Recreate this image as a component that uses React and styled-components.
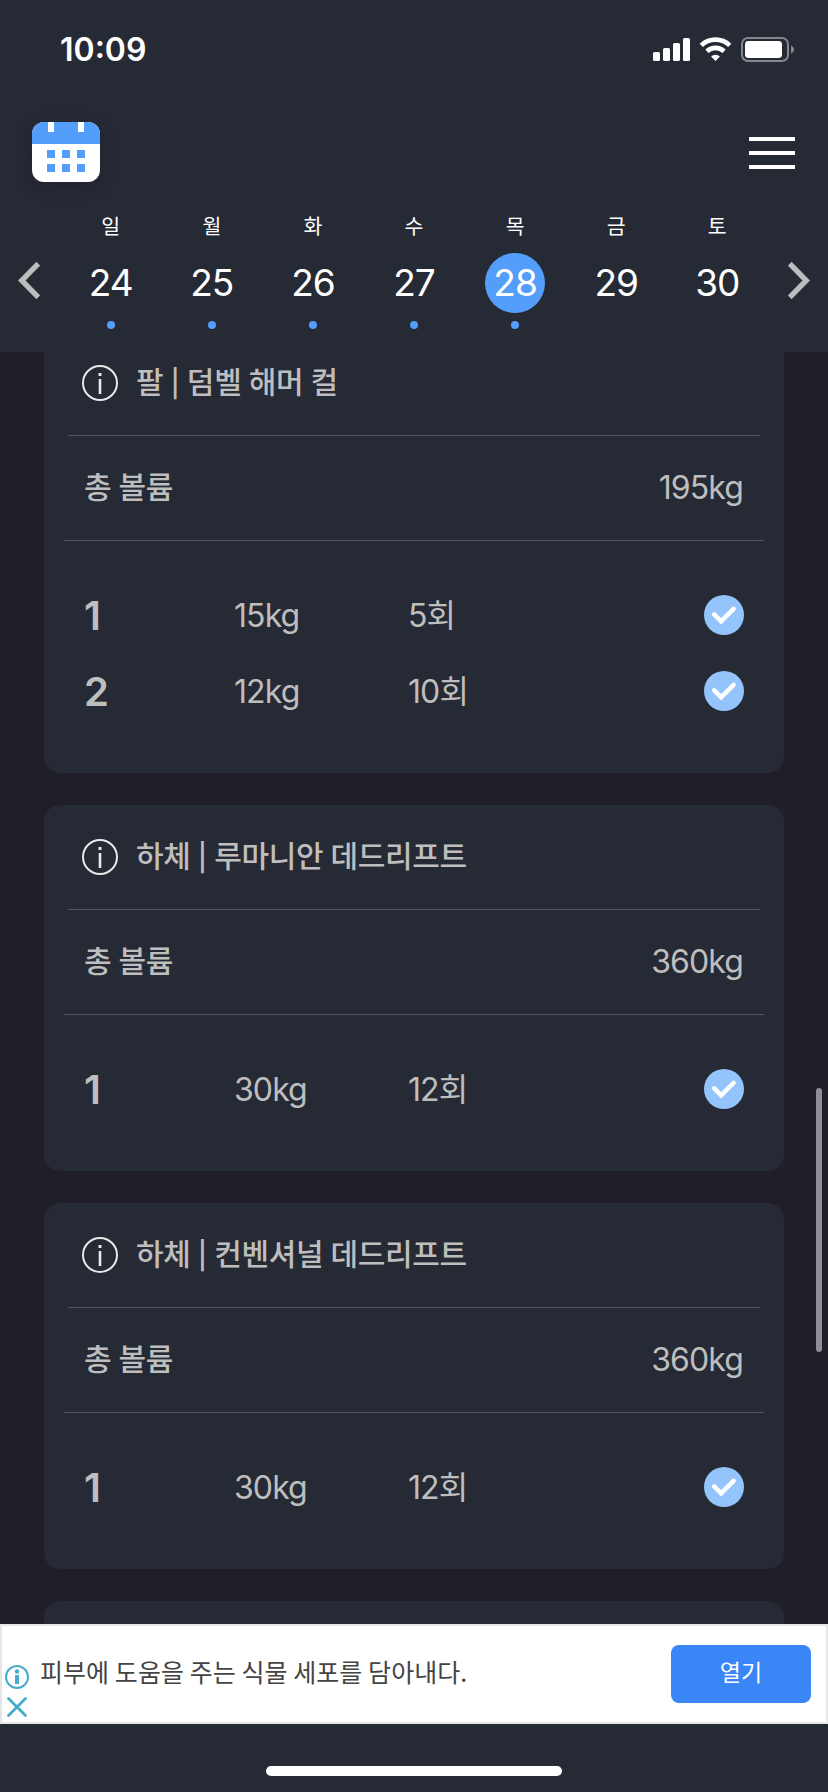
import React from "react";
import styled, { createGlobalStyle } from "styled-components";

const GlobalStyle = createGlobalStyle`
  * { box-sizing: border-box; }
  body { margin: 0; background: #201e29; }
`;

const Screen = styled.div`
  position: relative;
  width: 828px;
  height: 1792px;
  overflow: hidden;
  display: flex;
  flex-direction: column;
  background: #201e29;
  color: #bebebe;
  font-family: Inter, "Noto Sans CJK KR", sans-serif;
`;

const Header = styled.header`
  flex: none;
  height: 352px;
  background: #262a35;
  color: #fff;
`;

const StatusBar = styled.div`
  height: 98px;
  display: flex;
  justify-content: space-between;
  align-items: center;
  padding: 2px 33px 0 60px;
`;

const Time = styled.span`
  font-size: 32px;
  font-weight: 600;
  line-height: 40px;
`;

const TopBar = styled.div`
  height: 106px;
  padding: 24px 33px 0 32px;
  display: flex;
  justify-content: space-between;
`;

const CalendarIcon = styled.svg`
  width: 68px;
  height: 60px;
  border-radius: 12px;
  box-shadow: 0 4px 14px rgba(32, 22, 36, 0.45);
`;

const MenuButton = styled.div`
  width: 46px;
  margin-top: 15px;
  display: flex;
  flex-direction: column;
  gap: 10px;
`;

const MenuLine = styled.span`
  height: 4px;
  background: #fff;
`;

const Week = styled.div`
  display: flex;
  padding: 0 18px;
  justify-content: space-between;
`;

const Arrow = styled.svg`
  width: 22px;
  height: 37px;
  margin-top: 58px;
  fill: none;
  stroke: #bdbdbd;
  stroke-width: 5.4;
`;

const Days = styled.div`
  display: grid;
  grid-template-columns: repeat(7, 101.1px);
`;

const Day = styled.div`
  display: flex;
  flex-direction: column;
  align-items: center;
`;

const DayName = styled.span`
  height: 30px;
  line-height: 30px;
  margin: 8px 0 11px;
  font-size: 20.5px;
`;

const DayNumber = styled.span`
  width: 60px;
  height: 60px;
  padding-bottom: 2px;
  border-radius: 50%;
  display: flex;
  align-items: center;
  justify-content: center;
  background: ${(p) => (p.$selected ? "#539dfb" : "transparent")};
  font-size: 37px;
  letter-spacing: -1px;
`;

const DayDot = styled.span`
  width: 8px;
  height: 8px;
  margin-top: 8px;
  border-radius: 50%;
  background: #539dfb;
`;

const List = styled.main`
  flex: none;
  height: 1272px;
  overflow: hidden;
  padding: 0 44px;
  display: flex;
  flex-direction: column;
  gap: 32px;
`;

const Card = styled.section`
  flex: none;
  margin-top: ${(p) => (p.$scrolled ? "-21px" : "0")};
  min-height: 100px;
  padding: 0 20px 44px;
  border-radius: 16px;
  background: #262a35;
`;

const CardTitle = styled.div`
  height: 105px;
  margin: 0 4px;
  padding: 0 14px 1px;
  border-bottom: 1px solid #55535f;
  display: flex;
  align-items: center;
  gap: 18px;
`;

const InfoIcon = styled.svg`
  width: 36px;
  height: 36px;
  flex: none;
`;

const Label = styled.span`
  padding-bottom: ${(p) => (p.$title ? "0" : "2px")};
  font-size: 30px;
  font-weight: 500;
  line-height: 44px;
  letter-spacing: -0.33px;
  word-spacing: -0.4px;
  white-space: pre;
`;

const Pipe = styled.span`
  font-size: 27px;
`;

const Volume = styled.div`
  height: 105px;
  padding: 0 21px 0 20px;
  border-bottom: 1px solid #55535f;
  display: flex;
  align-items: center;
  justify-content: space-between;
`;

const Amount = styled.span`
  font-size: 32px;
  line-height: 44px;
  letter-spacing: -0.9px;
`;

const Sets = styled.div`
  padding-top: 36px;
`;

const SetRow = styled.div`
  height: 76px;
  padding: 0 20px;
  display: grid;
  grid-template-columns: 150px 174px 1fr 40px;
  align-items: center;
`;

const SetNumber = styled.span`
  padding-top: 2px;
  font-size: 40px;
  font-weight: 600;
  line-height: 48px;
`;

const SetValue = styled.span`
  padding-top: 2px;
  font-size: 32px;
  line-height: 44px;
  letter-spacing: -0.9px;
`;

const Check = styled.svg`
  width: 40px;
  height: 40px;
`;

const Ad = styled.aside`
  flex: none;
  height: 100px;
  border: 2px solid #e6e6e6;
  background: #fff;
  color: #444;
  display: flex;
  align-items: center;
  padding: 0 15px 0 3px;
`;

const AdMarks = styled.svg`
  width: 26px;
  height: 54px;
  margin-top: 36px;
`;

const AdText = styled.span`
  flex: 1;
  margin-left: 9px;
  padding-bottom: 6px;
  font-family: "Noto Sans CJK KR", sans-serif;
  font-size: 25px;
  line-height: 40px;
  letter-spacing: 0.06px;
`;

const AdButton = styled.span`
  width: 140px;
  height: 58px;
  border-radius: 8px;
  background: #3b86f7;
  color: #fff;
  font-family: "Noto Sans CJK KR", sans-serif;
  font-size: 23px;
  line-height: 52px;
  text-align: center;
`;

const Footer = styled.footer`
  flex: 1;
  background: #262a35;
  display: flex;
  justify-content: center;
  padding-top: 42px;
`;

const HomeBar = styled.span`
  width: 296px;
  height: 10px;
  border-radius: 5px;
  background: #fff;
`;

const ScrollThumb = styled.span`
  position: absolute;
  right: 6px;
  top: 1088px;
  width: 6px;
  height: 264px;
  border-radius: 3px;
  background: #8f8e94;
`;

const days = [
  ["일", 24, true],
  ["월", 25, true],
  ["화", 26, true],
  ["수", 27, true],
  ["목", 28, true],
  ["금", 29, false],
  ["토", 30, false],
];

const workouts = [
  { part: "팔", name: "덤벨 해머 컬", volume: "195kg", sets: [["15kg", "5회"], ["12kg", "10회"]] },
  { part: "하체", name: "루마니안 데드리프트", volume: "360kg", sets: [["30kg", "12회"]] },
  { part: "하체", name: "컨벤셔널 데드리프트", volume: "360kg", sets: [["30kg", "12회"]] },
];

function StatusIcons() {
  return (
    <svg width="142" height="26" viewBox="0 0 142 26" fill="#fff">
      <rect x="0" y="15" width="7" height="9" rx="1.6" />
      <rect x="10" y="11" width="7" height="13" rx="1.6" />
      <rect x="20" y="6" width="7" height="18" rx="1.6" />
      <rect x="30" y="1" width="7" height="23" rx="1.6" />
      <g fill="none" stroke="#fff" strokeWidth="4.6">
        <path d="M48.3 8.3a20.5 20.5 0 0 1 28.4 0" />
        <path d="M53.9 14.3a12.6 12.6 0 0 1 17.2 0" />
      </g>
      <path d="M62.5 24l-4.4-4.6a6.5 6.5 0 0 1 8.8 0z" />
      <rect x="89" y="1" width="46" height="23" rx="6" fill="none" stroke="#85878e" strokeWidth="2" />
      <rect x="92" y="4" width="37" height="17" rx="3.4" />
      <path d="M138 8.500c4 1.500 4 6.500 0 8z" fill="#85878e" />
    </svg>
  );
}

function Workout({ data, scrolled }) {
  return (
    <Card $scrolled={scrolled}>
      <CardTitle>
        <InfoIcon viewBox="0 0 36 36">
          <circle cx="18" cy="18" r="17" fill="none" stroke="#e8e8e8" strokeWidth="2" />
          <rect x="16.500" y="8" width="3" height="3" fill="#e8e8e8" />
          <rect x="16.700" y="14" width="2.600" height="15" fill="#e8e8e8" />
        </InfoIcon>
        <Label $title>
          {data.part} <Pipe>|</Pipe> {data.name}
        </Label>
      </CardTitle>
      <Volume>
        <Label>총 볼륨</Label>
        <Amount>{data.volume}</Amount>
      </Volume>
      <Sets>
        {data.sets.map(([weight, reps], i) => (
          <SetRow key={i}>
            <SetNumber>{i + 1}</SetNumber>
            <SetValue>{weight}</SetValue>
            <SetValue>{reps}</SetValue>
            <Check viewBox="0 0 40 40">
              <circle cx="20" cy="20" r="20" fill="#93c4fb" />
              <path d="M10.200 19.300l6.900 7 12.500-12.400" fill="none" stroke="#fff" strokeWidth="4.500" strokeLinecap="round" />
            </Check>
          </SetRow>
        ))}
      </Sets>
    </Card>
  );
}

export default function App() {
  return (
    <Screen>
      <GlobalStyle />
      <Header>
        <StatusBar>
          <Time>10:09</Time>
          <StatusIcons />
        </StatusBar>
        <TopBar>
          <CalendarIcon viewBox="0 0 68 60">
            <rect width="68" height="60" fill="#fff" />
            <rect width="68" height="22" fill="#539dfb" />
            <rect x="16" width="6" height="10" fill="#fff" />
            <rect x="46" width="6" height="10" fill="#fff" />
            {[28, 42].map((y) =>
              [15, 30, 45].map((x) => (
                <rect key={`${x}-${y}`} x={x} y={y} width="8" height="8" fill="#539dfb" />
              ))
            )}
          </CalendarIcon>
          <MenuButton>
            <MenuLine />
            <MenuLine />
            <MenuLine />
          </MenuButton>
        </TopBar>
        <Week>
          <Arrow viewBox="0 0 22 37">
            <path d="M20.300 1.700L3.700 18.500l16.600 16.800" />
          </Arrow>
          <Days>
            {days.map(([name, number, logged]) => (
              <Day key={name}>
                <DayName>{name}</DayName>
                <DayNumber $selected={number === 28}>{number}</DayNumber>
                {logged && <DayDot />}
              </Day>
            ))}
          </Days>
          <Arrow viewBox="0 0 22 37">
            <path d="M1.700 1.700l16.600 16.800L1.700 35.300" />
          </Arrow>
        </Week>
      </Header>
      <List>
        {workouts.map((w, i) => (
          <Workout key={w.name} data={w} scrolled={i === 0} />
        ))}
        <Card />
      </List>
      <Ad>
        <AdMarks viewBox="0 0 26 54" fill="none" stroke="#47abcc" strokeWidth="2">
          <circle cx="12" cy="12" r="11" />
          <circle cx="12" cy="6.500" r="2.200" fill="#47abcc" stroke="none" />
          <rect x="10" y="10" width="4" height="9" fill="#47abcc" stroke="none" />
          <path d="M3.500 33.500l17 17M20.500 33.500l-17 17" strokeWidth="2.800" strokeLinecap="round" />
        </AdMarks>
        <AdText>피부에 도움을 주는 식물 세포를 담아내다.</AdText>
        <AdButton>열기</AdButton>
      </Ad>
      <Footer>
        <HomeBar />
      </Footer>
      <ScrollThumb />
    </Screen>
  );
}
